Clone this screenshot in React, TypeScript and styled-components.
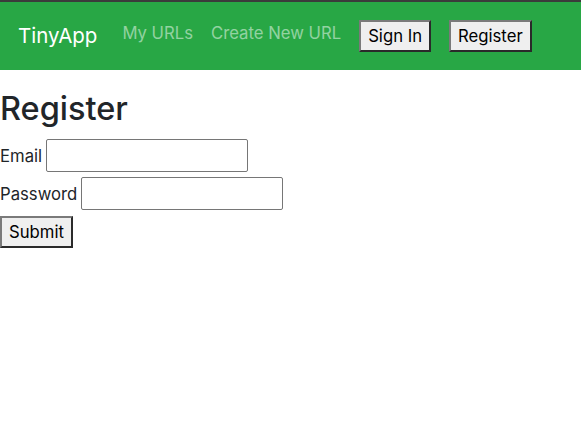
import React from "react";
import styled, { createGlobalStyle } from "styled-components";

const GlobalStyle = createGlobalStyle`
  html, body { margin: 0; padding: 0; background: #fff; }
  body {
    font-family: Inter, "Noto Sans", "Liberation Sans", sans-serif;
    font-size: 16.7px;
    line-height: 1.5;
    color: #212529;
  }
  * { box-sizing: border-box; }
`;

const Navbar = styled.nav`
  display: flex;
  align-items: flex-start;
  height: 70px;
  background: #28a745;
  border-top: 2px solid #3b3b3b;
  padding-left: 18px;
`;

const Brand = styled.a`
  font-size: 20.5px;
  line-height: 30px;
  color: #fff;
  text-decoration: none;
  margin-top: 19px;
  margin-right: 25px;
`;

const NavItems = styled.div`
  display: flex;
  align-items: flex-start;
  gap: 18px;
`;

const NavLink = styled.a`
  font-size: 16.7px;
  line-height: 24px;
  color: rgba(255, 255, 255, 0.5);
  text-decoration: none;
  margin-top: 19px;
`;

const Button = styled.button<{ $top?: number }>`
  font-family: inherit;
  font-size: 16.7px;
  line-height: 24px;
  color: #000;
  background: #efefef;
  padding: 2px 7px;
  margin: ${(p) => p.$top ?? 0}px 0 0;
  border-width: 2px;
  border-style: solid;
  border-color: #7a7a7a #2a2a2a #2a2a2a #7a7a7a;
  border-radius: 0;
  height: 32px;
`;

const Main = styled.main`
  display: flex;
  flex-direction: column;
  align-items: flex-start;
`;

const Title = styled.h1`
  font-size: 32.5px;
  font-weight: 500;
  line-height: 38px;
  margin: 20px 0 11px;
`;

const Form = styled.form`
  display: flex;
  flex-direction: column;
  align-items: flex-start;
  gap: 5px;
`;

const Field = styled.div`
  display: flex;
  align-items: center;
  gap: 4px;
`;

const Label = styled.label`
  font-size: 16.7px;
  line-height: 24px;
`;

const Input = styled.input`
  width: 202px;
  height: 33px;
  border: 1px solid #767676;
  border-radius: 2px;
  padding: 1px 2px;
  font-family: inherit;
  font-size: 16px;
  background: #fff;
`;

export default function App() {
  return (
    <>
      <GlobalStyle />
      <Navbar>
        <Brand href="#">TinyApp</Brand>
        <NavItems>
          <NavLink href="#">My URLs</NavLink>
          <NavLink href="#">Create New URL</NavLink>
          <Button $top={18}>Sign In</Button>
          <Button $top={18}>Register</Button>
        </NavItems>
      </Navbar>
      <Main>
        <Title>Register</Title>
        <Form onSubmit={(e) => e.preventDefault()}>
          <Field>
            <Label htmlFor="email">Email</Label>
            <Input id="email" type="email" />
          </Field>
          <Field>
            <Label htmlFor="password">Password</Label>
            <Input id="password" type="password" />
          </Field>
          <Button type="submit" $top={1}>Submit</Button>
        </Form>
      </Main>
    </>
  );
}
